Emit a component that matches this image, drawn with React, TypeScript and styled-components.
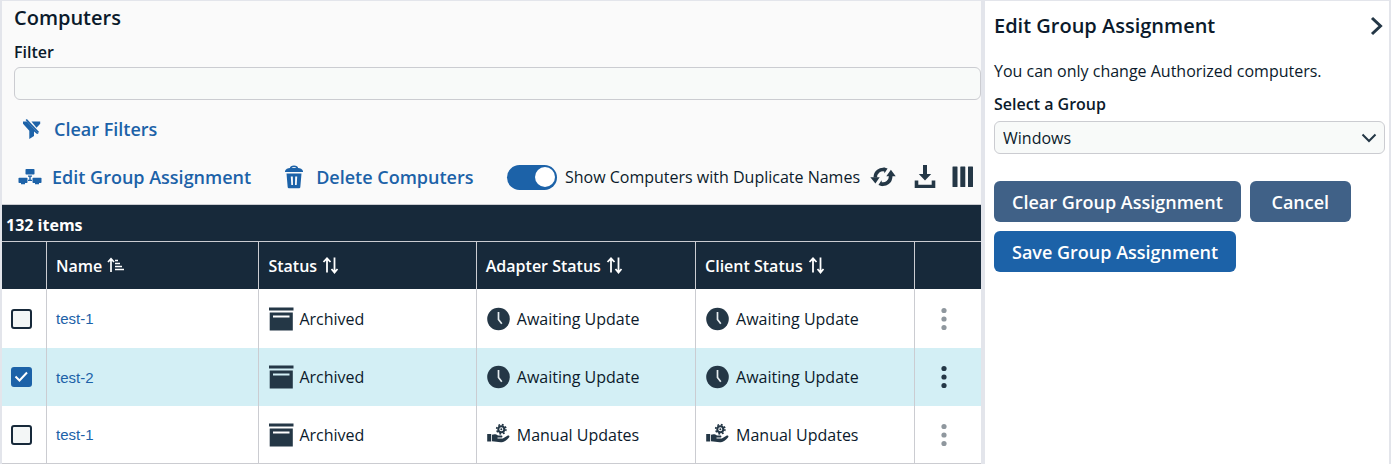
import React, { useState } from "react";
import styled, { createGlobalStyle, css } from "styled-components";

const color = {
  ink: "#0b1a2b",
  icon: "#243746",
  navy: "#17293a",
  blue: "#1c62a8",
  slate: "#406187",
  line: "#cbccd1",
  divider: "#e3e5eb",
  field: "#f8faf9",
  panel: "#fafafa",
  selected: "#d3eff5",
  muted: "#8f979e",
};

const GlobalStyle = createGlobalStyle`
  *, *::before, *::after { box-sizing: border-box; }
  body {
    margin: 0;
    background: ${color.panel};
    color: ${color.ink};
    font: 400 16px/24px "Open Sans", sans-serif;
  }
  button, input, select { font: inherit; color: inherit; margin: 0; }
  svg { display: block; flex: none; }
`;

const Page = styled.div`
  display: flex;
  min-height: 100vh;
  border: solid ${color.divider};
  border-width: 1px 2px 0;
`;

const Main = styled.main`
  flex: 1;
  min-width: 0;
`;

const Filters = styled.header`
  padding: 3px 0 0 12px;
`;

const Title = styled.h1`
  margin: 0;
  font-size: 20px;
  line-height: 28px;
  font-weight: 600;
`;

const FieldLabel = styled.label`
  display: block;
  font-weight: 600;
  margin: 8px 0 3px;
`;

const fieldBox = css`
  width: 100%;
  height: 33px;
  border: 1px solid ${color.line};
  border-radius: 6px;
  background: ${color.field};
  padding: 0 8px;
`;

const TextField = styled.input`
  ${fieldBox}
  display: block;
`;

const ActionRow = styled.div<{ $indent: number }>`
  display: flex;
  align-items: center;
  height: 48px;
  gap: 31px;
  padding: 0 7px 0 ${(p) => p.$indent}px;
`;

const Actions = styled.div`
  padding: 5px 0 3px;
`;

const TextAction = styled.button`
  display: flex;
  align-items: center;
  gap: 10px;
  padding: 0;
  border: 0;
  background: none;
  color: ${color.blue};
  font-size: 18px;
  font-weight: 600;
  white-space: nowrap;
  cursor: pointer;
`;

const ViewTools = styled.div`
  display: flex;
  align-items: center;
  gap: 8px;
  margin-left: auto;
`;

const SwitchLabel = styled.label`
  display: flex;
  align-items: center;
  gap: 8px;
  white-space: nowrap;
`;

const Switch = styled.input`
  appearance: none;
  display: flex;
  align-items: center;
  width: 50px;
  height: 25px;
  padding: 0 2px;
  border-radius: 13px;
  background: ${color.muted};
  cursor: pointer;
  &::before {
    content: "";
    width: 20px;
    height: 20px;
    border-radius: 50%;
    background: #fff;
  }
  &:checked {
    justify-content: flex-end;
    background: ${color.blue};
  }
`;

const IconGroup = styled.div`
  display: flex;
  align-items: center;
  gap: 16px;
`;

const IconButton = styled.button<{ $muted?: boolean }>`
  display: block;
  padding: 0;
  border: 0;
  background: none;
  color: ${(p) => (p.$muted ? color.muted : color.icon)};
  cursor: pointer;
`;

const Table = styled.table`
  width: 100%;
  table-layout: fixed;
  border-collapse: separate;
  border-spacing: 0;
  border: solid ${color.line};
  border-width: 1px 0;
  background: #fff;
`;

const Col = styled.col<{ $width?: string }>`
  width: ${(p) => p.$width ?? "auto"};
`;

const CountCell = styled.th`
  height: 37px;
  padding: 4px 4px 0;
  border-bottom: 1px solid ${color.line};
  background: ${color.navy};
  color: #fff;
  font-weight: 700;
  text-align: left;
`;

const HeadCell = styled.th`
  height: 47px;
  padding: 0 9px;
  border-right: 1px solid ${color.line};
  background: ${color.navy};
  color: #fff;
  font-weight: 600;
  text-align: left;
  &:last-child { border-right: 0; }
`;

const SortButton = styled.button`
  display: flex;
  align-items: center;
  gap: 5px;
  padding: 0;
  border: 0;
  background: none;
  color: inherit;
  white-space: nowrap;
  cursor: pointer;
`;

const Cell = styled.td`
  height: 58px;
  padding: 0 9px;
  border-right: 1px solid ${color.line};
  &:last-child { border-right: 0; padding: 0 25px; }
`;

const Row = styled.tr<{ $selected: boolean }>`
  background: ${(p) => (p.$selected ? color.selected : "#fff")};
  &:first-child ${Cell} { height: 59px; }
  &:last-child ${Cell} { height: 57px; }
`;

const NameLink = styled.a`
  font-family: "Liberation Sans", Arial, sans-serif;
  font-size: 15px;
  color: ${color.blue};
  text-decoration: none;
`;

const Status = styled.span`
  display: flex;
  align-items: center;
  gap: 7px;
  white-space: nowrap;
`;

const Stack = styled.span`
  display: grid;
  align-items: center;
  & > * { grid-area: 1 / 1; }
  & > svg { pointer-events: none; }
`;

const Tick = styled.input`
  appearance: none;
  width: 21px;
  height: 20px;
  border: 2px solid ${color.navy};
  border-radius: 3px;
  background: #f3f6f6;
  &:checked {
    border-color: ${color.blue};
    background: ${color.blue};
  }
`;

const Side = styled.aside`
  flex: 0 0 408px;
  border-left: 4px solid ${color.divider};
  background: #fff;
  padding: 11px 4px 0 9px;
`;

const SideHead = styled.div`
  display: flex;
  align-items: center;
  justify-content: space-between;
`;

const Note = styled.p`
  margin: 19px 0 9px;
`;

const SelectStack = styled(Stack)`
  margin-top: 5px;
  & > svg { justify-self: end; margin-right: 8px; }
`;

const Select = styled.select`
  ${fieldBox}
  appearance: none;
`;

const Buttons = styled.div`
  display: flex;
  flex-wrap: wrap;
  gap: 9px;
  margin-top: 27px;
`;

const Button = styled.button<{ $primary?: boolean }>`
  min-width: 101px;
  height: 41px;
  padding: 0 18px;
  border: 0;
  border-radius: 6px;
  background: ${(p) => (p.$primary ? color.blue : color.slate)};
  color: #fff;
  font-size: 18px;
  font-weight: 600;
  white-space: nowrap;
  cursor: pointer;
`;

const FilterOffIcon = () => (
  <svg width="24" height="24" viewBox="0 0 24 24" fill="currentColor" aria-hidden="true">
    <path d="M3 4.500h4L18.500 16.500l-1.500.5-3-2.500v4.600l-4.700 3v-8.400L3 6.800z" />
    <path d="M11.500 4.500h8.700v2.300l-3.700 4z" />
    <path d="M6.200 2.500 18.500 15.500" stroke="currentColor" strokeWidth="1.800" fill="none" />
  </svg>
);

const GroupIcon = () => (
  <svg width="24" height="24" viewBox="0 0 24 24" fill="currentColor" aria-hidden="true">
    <rect x="7.500" y="4" width="9" height="5.500" rx=".8" />
    <rect x="0.500" y="12.700" width="9" height="5.300" rx=".8" />
    <rect x="14.500" y="12.700" width="9" height="5.300" rx=".8" />
    <path d="M3 18h4v1.300H3zM17 18h4v1.300h-4zM10 10.500h4v1.200h-1.300v3H14v1.200h-4v-1.200h1.300v-3H10z" />
  </svg>
);

const TrashIcon = () => (
  <svg width="24" height="24" viewBox="0 0 24 24" aria-hidden="true">
    <path d="M8.500 3.500c.5-3 6.500-3 7 0" fill="none" stroke="currentColor" strokeWidth="1.500" />
    <path d="M3 7V6c.7-2 2.700-3 5-3h8c2.300 0 4.300 1 5 3v1z" fill="currentColor" />
    <path
      fillRule="evenodd"
      fill="currentColor"
      d="M4.500 8.500h15l-1.200 13.700c-.1.700-.5 1.100-1.200 1.100H6.900c-.7 0-1.100-.4-1.200-1.100zM8.800 11.500l.5 8.500h1.700l-.2-8.500zM13.200 11.500l-.2 8.500h1.700l.5-8.500z"
    />
  </svg>
);

const RefreshIcon = () => (
  <svg width="30" height="24" viewBox="0 0 30 24" aria-hidden="true">
    <g fill="none" stroke="currentColor" strokeWidth="3.600">
      <path d="M7.300 12.500C7.300 7 12 3.700 17 4.800" />
      <path d="M22.700 11C22.700 16.800 18 20 13 18.900" />
    </g>
    <path d="M2.300 12.200h9.400L7.400 18.400zM18.300 11.300h9.400L22.900 4.800z" fill="currentColor" />
    <path d="M15.500 2.300 19.600 3.600 16.500 8.300zM14.500 21.300l-4.100-1.300 3.100-4.700z" fill="currentColor" />
  </svg>
);

const DownloadIcon = () => (
  <svg width="22" height="24" viewBox="0 0 22 24" fill="currentColor" aria-hidden="true">
    <path d="M9 0h4v9h4.200L11 15.500 4.800 9H9z" />
    <path d="M.7 15.500h3.600v4.200h13.400v-4.200h3.600V23H.7z" />
  </svg>
);

const ColumnsIcon = () => (
  <svg width="22" height="24" viewBox="0 0 22 24" fill="currentColor" aria-hidden="true">
    <rect x=".5" y="1.500" width="5" height="20.500" rx=".5" />
    <rect x="8.300" y="1.500" width="5" height="20.500" rx=".5" />
    <rect x="16" y="1.500" width="5" height="20.500" rx=".5" />
  </svg>
);

const SortedIcon = () => (
  <svg width="18" height="18" viewBox="0 0 18 18" fill="none" stroke="currentColor" aria-hidden="true">
    <path d="M4 15V2M1 5 4 1.700 7 5" strokeWidth="1.700" />
    <path d="M8 3.500h3M8 6.500h5M8 9.500h7M8 12.500h9" strokeWidth="1.700" />
  </svg>
);

const SortIcon = () => (
  <svg width="18" height="18" viewBox="0 0 18 18" fill="none" stroke="currentColor" strokeWidth="1.800" aria-hidden="true">
    <path d="M5 15.500V1.500M1.500 5 5 1.300 8.500 5M12.500.5V15M9.500 12l3 3.500 3-3.500" />
  </svg>
);

const ArchiveIcon = () => (
  <svg width="24" height="24" viewBox="0 0 24 24" overflow="visible" fill={color.icon} aria-hidden="true">
    <rect x="1" y="0.500" width="24.500" height="3" />
    <path fillRule="evenodd" d="M1.700 5.500h23.100v18H1.700zM5 8.500v2h16.500v-2z" />
  </svg>
);

const ClockIcon = () => (
  <svg width="24" height="24" viewBox="0 0 24 24" aria-hidden="true">
    <circle cx="12.500" cy="12" r="11.300" fill={color.icon} />
    <path d="M12.500 5v7.500l3.300 4.300" fill="none" stroke="#e6edf0" strokeWidth="1.700" />
  </svg>
);

const HandGearIcon = () => (
  <svg width="24" height="24" viewBox="0 0 24 24" fill={color.icon} aria-hidden="true">
    <rect x="1.200" y="11" width="4" height="7.500" />
    <path d="M6 11.700c2.500-1 4.300-.5 6 .8h3.300c1.500 0 1.500 2 0 2.100h-3.800v.8h5.300l4.600-2.600c1.500-.8 2.700.5 1.600 1.600-2 2.200-4.800 4.600-7 4.800-3.500.3-6.500-.7-10-.9z" />
    <circle cx="15.300" cy="6.200" r="3" fill="none" stroke={color.icon} strokeWidth="2" />
    <circle cx="15.300" cy="6.200" r="4.600" fill="none" stroke={color.icon} strokeWidth="1.700" strokeDasharray="1.806 1.806" />
    <circle cx="15.300" cy="6.200" r="1" />
  </svg>
);

const MoreIcon = () => (
  <svg width="8" height="24" viewBox="0 0 8 24" fill="currentColor" aria-hidden="true">
    <circle cx="4" cy="3.500" r="2.600" />
    <circle cx="4" cy="12" r="2.600" />
    <circle cx="4" cy="20.500" r="2.600" />
  </svg>
);

const CheckIcon = () => (
  <svg width="21" height="20" viewBox="0 0 21 20" fill="none" stroke="#fff" strokeWidth="2" aria-hidden="true">
    <path d="M4.500 9.500 8.500 13.500 16 5.500" />
  </svg>
);

const ChevronDown = () => (
  <svg width="16" height="10" viewBox="0 0 16 10" fill="none" stroke={color.icon} strokeWidth="2" aria-hidden="true">
    <path d="M1.500 1.500 8 8l6.500-6.500" />
  </svg>
);

const ChevronRight = () => (
  <svg width="16" height="20" viewBox="0 0 16 20" fill="none" stroke="currentColor" strokeWidth="3" aria-hidden="true">
    <path d="M3 2l8.500 8L3 18" />
  </svg>
);

type Mode = "Awaiting Update" | "Manual Updates";
type Computer = { id: number; name: string; adapter: Mode; client: Mode };

const computers: Computer[] = [
  { id: 1, name: "test-1", adapter: "Awaiting Update", client: "Awaiting Update" },
  { id: 2, name: "test-2", adapter: "Awaiting Update", client: "Awaiting Update" },
  { id: 3, name: "test-1", adapter: "Manual Updates", client: "Manual Updates" },
];

const UpdateStatus = ({ mode }: { mode: Mode }) => (
  <Status>
    {mode === "Awaiting Update" ? <ClockIcon /> : <HandGearIcon />}
    {mode}
  </Status>
);

const ComputerRow = ({ item, selected, onToggle }: { item: Computer; selected: boolean; onToggle: () => void }) => (
  <Row $selected={selected}>
    <Cell>
      <Stack>
        <Tick type="checkbox" aria-label={`Select ${item.name}`} checked={selected} onChange={onToggle} />
        {selected && <CheckIcon />}
      </Stack>
    </Cell>
    <Cell><NameLink href="#">{item.name}</NameLink></Cell>
    <Cell><Status><ArchiveIcon />Archived</Status></Cell>
    <Cell><UpdateStatus mode={item.adapter} /></Cell>
    <Cell><UpdateStatus mode={item.client} /></Cell>
    <Cell>
      <IconButton type="button" $muted={!selected} aria-label="More actions"><MoreIcon /></IconButton>
    </Cell>
  </Row>
);

export default function App() {
  const [selectedId, setSelectedId] = useState<number | null>(2);
  return (
    <>
      <GlobalStyle />
      <Page>
        <Main>
          <Filters>
            <Title>Computers</Title>
            <FieldLabel htmlFor="filter">Filter</FieldLabel>
            <TextField id="filter" type="text" />
          </Filters>
          <Actions>
            <ActionRow $indent={18}>
              <TextAction type="button"><FilterOffIcon />Clear Filters</TextAction>
            </ActionRow>
            <ActionRow $indent={16}>
              <TextAction type="button"><GroupIcon />Edit Group Assignment</TextAction>
              <TextAction type="button"><TrashIcon />Delete Computers</TextAction>
              <ViewTools>
                <SwitchLabel>
                  <Switch type="checkbox" role="switch" defaultChecked />
                  Show Computers with Duplicate Names
                </SwitchLabel>
                <IconGroup>
                  <IconButton type="button" aria-label="Refresh"><RefreshIcon /></IconButton>
                  <IconButton type="button" aria-label="Download"><DownloadIcon /></IconButton>
                  <IconButton type="button" aria-label="Columns"><ColumnsIcon /></IconButton>
                </IconGroup>
              </ViewTools>
            </ActionRow>
          </Actions>
          <Table>
            <colgroup>
              <Col $width="45px" />
              <Col $width="21.7%" />
              <Col $width="22.2%" />
              <Col $width="22.4%" />
              <Col $width="22.4%" />
              <Col />
            </colgroup>
            <thead>
              <tr><CountCell colSpan={6}>132 items</CountCell></tr>
              <tr>
                <HeadCell />
                <HeadCell><SortButton type="button">Name<SortedIcon /></SortButton></HeadCell>
                <HeadCell><SortButton type="button">Status<SortIcon /></SortButton></HeadCell>
                <HeadCell><SortButton type="button">Adapter Status<SortIcon /></SortButton></HeadCell>
                <HeadCell><SortButton type="button">Client Status<SortIcon /></SortButton></HeadCell>
                <HeadCell />
              </tr>
            </thead>
            <tbody>
              {computers.map((c) => (
                <ComputerRow
                  key={c.id}
                  item={c}
                  selected={c.id === selectedId}
                  onToggle={() => setSelectedId(c.id === selectedId ? null : c.id)}
                />
              ))}
            </tbody>
          </Table>
        </Main>
        <Side>
          <SideHead>
            <Title as="h2">Edit Group Assignment</Title>
            <IconButton type="button" aria-label="Close panel"><ChevronRight /></IconButton>
          </SideHead>
          <Note>You can only change Authorized computers.</Note>
          <FieldLabel htmlFor="group">Select a Group</FieldLabel>
          <SelectStack>
            <Select id="group" defaultValue="Windows"><option>Windows</option></Select>
            <ChevronDown />
          </SelectStack>
          <Buttons>
            <Button type="button">Clear Group Assignment</Button>
            <Button type="button">Cancel</Button>
            <Button type="button" $primary>Save Group Assignment</Button>
          </Buttons>
        </Side>
      </Page>
    </>
  );
}
